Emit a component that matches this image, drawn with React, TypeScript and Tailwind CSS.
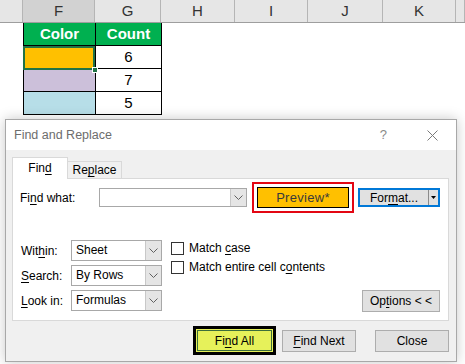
import React from 'react'

const font = { fontFamily: '"Liberation Sans", Arial, sans-serif' }

function U({ children }: { children: React.ReactNode }) {
  return <span className="underline underline-offset-2">{children}</span>
}

function Chevron() {
  return (
    <svg width="9" height="6" viewBox="0 0 9 6" className="block">
      <path d="M0.5 0.5 L4.5 4.5 L8.5 0.5" fill="none" stroke="#606060" strokeWidth="1" />
    </svg>
  )
}

function Select({ value }: { value: string }) {
  return (
    <div className="flex h-[21px] w-[91px] border border-[#a8a8a8] bg-white">
      <div className="flex-1 pl-[4px] leading-[19px]">{value}</div>
      <div className="flex w-[16px] items-center justify-center border-l border-[#c8c8c8] bg-[#e5e5e5]">
        <Chevron />
      </div>
    </div>
  )
}

function Btn({ children, w = 'w-[74px]' }: { children: React.ReactNode; w?: string }) {
  return (
    <div className={`${w} flex h-[22px] items-center justify-center border border-[#adadad] bg-[#e1e1e1]`}>
      {children}
    </div>
  )
}

const cols = [
  { l: '', w: 'w-[23px]' },
  { l: 'F', w: 'w-[72px]', sel: true },
  { l: 'G', w: 'w-[66px]' },
  { l: 'H', w: 'w-[74px]' },
  { l: 'I', w: 'w-[73px]' },
  { l: 'J', w: 'w-[75px]' },
  { l: 'K', w: 'w-[73px]' },
  { l: '', w: 'flex-1' },
]

export default function App() {
  return (
    <div className="relative h-[364px] w-[465px] overflow-hidden bg-white text-[12px] text-black" style={font}>
      {/* column headers */}
      <div className="flex h-[23px] border-b border-[#9e9e9e] bg-[#e6e6e6]">
        {cols.map((c, i) => (
          <div
            key={i}
            className={`${c.w} flex items-center justify-center border-r border-[#b5b5b5] text-[15px] text-[#333] ${c.sel ? 'bg-[#d2d2d2]' : ''}`}
          >
            {c.l}
          </div>
        ))}
      </div>

      {/* data table */}
      <div className="ml-[23px] grid w-[139px] grid-cols-[72px_66px] border-l border-black text-[15px]">
        <div className="flex h-[23px] items-center justify-center border-r border-b border-black bg-[#00b050] font-bold text-white">Color</div>
        <div className="flex h-[23px] items-center justify-center border-r border-b border-black bg-[#00b050] font-bold text-white">Count</div>
        <div className="h-[23px] border-r border-b border-black bg-[#ffc000]" />
        <div className="flex h-[23px] items-center justify-center border-r border-b border-black">6</div>
        <div className="h-[23px] border-r border-b border-black bg-[#ccc0da]" />
        <div className="flex h-[23px] items-center justify-center border-r border-b border-black">7</div>
        <div className="h-[23px] border-r border-b border-black bg-[#b7dee8]" />
        <div className="flex h-[23px] items-center justify-center border-r border-b border-black">5</div>
      </div>

      {/* active cell selection */}
      <div className="absolute left-[23px] top-[46px] h-[24px] w-[72px] border-2 border-[#217346]" />
      <div className="absolute left-[92px] top-[67px] h-[6px] w-[6px] border border-white bg-[#217346]" />

      {/* Find and Replace dialog */}
      <div className="absolute left-[5px] top-[119px] flex h-[243px] w-[452px] flex-col border border-[#a8a8a8] bg-[#f0f0f0] shadow-[0_0_12px_rgba(0,0,0,0.22)]">
        <div className="flex h-[30px] items-center bg-white pl-[8px] text-[#6d6d6d]">
          <span className="flex-1 text-[12.5px]">Find and Replace</span>
          <span className="mr-[40px] text-[13px] text-[#8a8a8a]">?</span>
          <svg width="11" height="11" viewBox="0 0 11 11" className="mr-[18px]">
            <path d="M0.5 0.5 L10.5 10.5 M10.5 0.5 L0.5 10.5" stroke="#7a7a7a" strokeWidth="1" />
          </svg>
        </div>

        <div className="flex flex-1 flex-col px-[6px] pt-[7px]">
          {/* tabs */}
          <div className="relative z-10 -mb-px flex items-end">
            <div className="flex h-[22px] w-[56px] items-center justify-center border border-b-0 border-[#d9d9d9] bg-white pb-[2px]">
              Fin<U>d</U>
            </div>
            <div className="flex h-[18px] w-[54px] items-center justify-center border border-l-0 border-[#d9d9d9] bg-[#f0f0f0]">
              Re<U>p</U>lace
            </div>
            <div className="flex-1" />
          </div>

          {/* panel */}
          <div className="flex h-[143px] w-[437px] flex-col border border-[#d9d9d9] bg-white px-[7px]">
            <div className="mt-[3px] flex h-[31px] items-center">
              <div className="w-[79px]">
                Fi<U>n</U>d what:
              </div>
              <div className="flex h-[19px] w-[148px] border border-[#a8a8a8]">
                <div className="flex-1" />
                <div className="flex w-[16px] items-center justify-center border-l border-[#c8c8c8] bg-[#e5e5e5]">
                  <Chevron />
                </div>
              </div>
              <div className="ml-[5px] h-[31px] w-[102px] border-2 border-[#e30613] px-[3px] py-[3px]">
                <div className="flex h-full items-center justify-center border border-black bg-[#ffc000] text-[13px] tracking-[0.3px] text-[#3a3a3a]">
                  Preview*
                </div>
              </div>
              <div className="ml-[4px] flex h-[19px] w-[82px] border-2 border-[#0078d7] bg-[#e1e1e1]">
                <div className="flex flex-1 items-center justify-center">
                  For<U>m</U>at...
                </div>
                <div className="flex w-[10px] items-center justify-center border-l border-[#8a8a8a]">
                  <svg width="5" height="3" viewBox="0 0 5 3">
                    <path d="M0 0 L5 0 L2.5 3 Z" fill="#000" />
                  </svg>
                </div>
              </div>
            </div>

            <div className="mt-[27px] flex flex-1 pb-[8px]">
              <div className="flex flex-col gap-[4px] pl-[1px]">
                <div className="flex items-center">
                  <div className="w-[50px]">
                    Wit<U>h</U>in:
                  </div>
                  <Select value="Sheet" />
                </div>
                <div className="flex items-center">
                  <div className="w-[50px]">
                    <U>S</U>earch:
                  </div>
                  <Select value="By Rows" />
                </div>
                <div className="flex items-center">
                  <div className="w-[50px]">
                    <U>L</U>ook in:
                  </div>
                  <Select value="Formulas" />
                </div>
              </div>

              <div className="ml-[9px] flex flex-col gap-[5px] pt-[1px]">
                <div className="flex h-[14px] items-center gap-[5px] leading-[14px]">
                  <div className="h-[13px] w-[13px] border border-[#333] bg-white" />
                  <span>
                    Match <U>c</U>ase
                  </span>
                </div>
                <div className="flex h-[14px] items-center gap-[5px] leading-[14px]">
                  <div className="h-[13px] w-[13px] border border-[#333] bg-white" />
                  <span>
                    Match entire cell c<U>o</U>ntents
                  </span>
                </div>
              </div>

              <div className="flex flex-1 items-end justify-end pr-[1px]">
                <Btn w="w-[78px]">
                  Op<U>t</U>ions &lt; &lt;
                </Btn>
              </div>
            </div>
          </div>

          {/* bottom buttons */}
          <div className="mt-[5px] flex items-center justify-end pr-[1px]">
            <div className="h-[29px] w-[83px] border-[3px] border-black bg-[#e6f15a] p-px">
              <div className="flex h-full items-center justify-center border border-[#3c6e3c] bg-[#e6f15a]">
                Fi<U>n</U>d All
              </div>
            </div>
            <div className="ml-[6px]">
              <Btn>
                <U>F</U>ind Next
              </Btn>
            </div>
            <div className="ml-[19px]">
              <Btn>Close</Btn>
            </div>
          </div>
        </div>
      </div>
    </div>
  )
}
